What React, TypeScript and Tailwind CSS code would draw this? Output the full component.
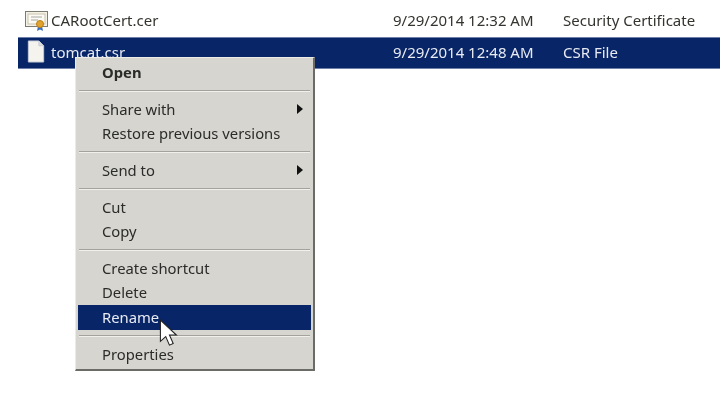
type MenuEntry = { label: string; bold?: boolean; arrow?: boolean; active?: boolean } | 'sep';

const menu: MenuEntry[] = [
  { label: 'Open', bold: true },
  'sep',
  { label: 'Share with', arrow: true },
  { label: 'Restore previous versions' },
  'sep',
  { label: 'Send to', arrow: true },
  'sep',
  { label: 'Cut' },
  { label: 'Copy' },
  'sep',
  { label: 'Create shortcut' },
  { label: 'Delete' },
  { label: 'Rename', active: true },
  'sep',
  { label: 'Properties' },
];

function CertIcon() {
  return (
    <svg width="24" height="22" viewBox="0 0 24 22" className="shrink-0">
      <rect x="0.5" y="1.5" width="22" height="15" fill="#f4f1e6" stroke="#7d7a70" />
      <rect x="3" y="4" width="17" height="10" fill="#fbfaf4" stroke="#c9c3ad" />
      <path d="M6 7h11M6 10h7" stroke="#a8a6a0" strokeWidth="1" />
      <path d="M13 16l-1 5 3-1.500 3 1.500-1-5z" fill="#3a6fc0" />
      <circle cx="15" cy="14" r="3.500" fill="#e2a32c" stroke="#b97f18" />
    </svg>
  );
}

function PageIcon() {
  return (
    <svg width="18" height="23" viewBox="0 0 18 24" className="shrink-0 -mt-[2px]">
      <path d="M1 1h11l5 5v17H1z" fill="#f4f3ee" stroke="#c8ccd6" />
      <path d="M12 1v5h5" fill="#dcdcdc" stroke="#c8ccd6" />
    </svg>
  );
}

export default function App() {
  return (
    <div className="relative w-[720px] h-[401px] overflow-hidden bg-white pt-[5px] font-['Noto_Sans',sans-serif] text-[15px] blur-[0.5px]">
      <div className="flex h-[32px] items-center text-[#33352f] pl-[25px] pb-[1px]">
        <CertIcon />
        <span className="ml-[2px] w-[342px]">CARootCert.cer</span>
        <span className="w-[170px]">9/29/2014 12:32 AM</span>
        <span>Security Certificate</span>
      </div>
      <div className="ml-[18px] flex h-[32px] items-center bg-[#082567] border-y border-[#6d7fa8] pl-[9px] pb-[1px] text-[#e8ebf2]">
        <PageIcon />
        <span className="ml-[6px] w-[342px]">tomcat.csr</span>
        <span className="w-[170px]">9/29/2014 12:48 AM</span>
        <span>CSR File</span>
      </div>

      <div className="absolute left-[75px] top-[57px] w-[240px] h-[314px] bg-[#d6d5cf] border-t border-l border-[#ecebe6] border-r-2 border-b-2 border-r-[#6b6b68] border-b-[#6b6b68] pt-[2px] px-[2px] text-[14.8px] text-[#2b2b2a]">
        {menu.map((entry, i) =>
          entry === 'sep' ? (
            <div key={i} className="flex h-[13px] items-center px-[1px]">
              <div className="w-full h-[2px] border-t border-[#a3a29c] border-b border-b-[#f1f0ec]" />
            </div>
          ) : (
            <div
              key={i}
              className={`flex items-center justify-between pl-[24px] pr-[8px] ${
                entry.active ? 'h-[25px] mt-[1px] -mb-[1px] pb-[1px] bg-[#082567] text-[#e8ebf2]' : 'h-[24px]'
              } ${entry.bold ? 'font-bold' : ''}`}
            >
              <span>{entry.label}</span>
              {entry.arrow && (
                <svg width="6" height="10" viewBox="0 0 6 10" className="-mt-[1px]">
                  <path d="M0 0l6 5-6 5z" fill="#111" />
                </svg>
              )}
            </div>
          )
        )}
      </div>

      <svg
        width="22"
        height="32"
        viewBox="0 0 20 30"
        className="absolute left-[159px] top-[319px]"
      >
        <path
          d="M1 1v20l5-4.500 3.500 8 3.500-1.500-3.500-8H16z"
          fill="#fff"
          stroke="#222"
          strokeWidth="1"
        />
      </svg>
    </div>
  );
}
